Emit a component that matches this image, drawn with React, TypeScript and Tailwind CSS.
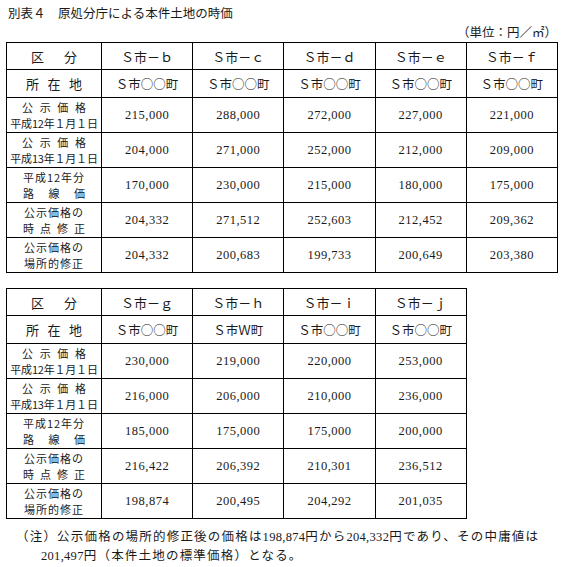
import React from "react";

const jp = { fontFamily: '"Liberation Serif", "Noto Sans CJK JP", serif' };
const cjk = { fontFamily: '"Noto Sans CJK JP", "Liberation Serif", serif' };

const kouji = (year: string) => (
  <div className="flex flex-col leading-[16px] text-[11px]">
    <div className="flex justify-between px-[15px] whitespace-nowrap">
      <span>公</span>
      <span>示</span>
      <span>価</span>
      <span>格</span>
    </div>
    <div className="tracking-[-0.2px] text-center whitespace-nowrap">
      平成{year}年１月１日
    </div>
  </div>
);

const rosen = (
  <div className="flex flex-col leading-[16px] text-[11px]">
    <div className="text-center whitespace-nowrap tracking-[1px]">平成12年分</div>
    <div className="flex justify-between px-[16px] whitespace-nowrap">
      <span>路</span>
      <span>線</span>
      <span>価</span>
    </div>
  </div>
);

const jiten = (
  <div className="flex flex-col leading-[16px] text-[11px]">
    <div className="text-center whitespace-nowrap tracking-[1px]">公示価格の</div>
    <div className="flex justify-between px-[16px] whitespace-nowrap">
      <span>時</span>
      <span>点</span>
      <span>修</span>
      <span>正</span>
    </div>
  </div>
);

const basho = (
  <div className="flex flex-col leading-[16px] text-[11px]">
    <div className="text-center whitespace-nowrap tracking-[1px]">公示価格の</div>
    <div className="text-center whitespace-nowrap tracking-[1px]">場所的修正</div>
  </div>
);

function PriceTable({
  names,
  towns,
  rows,
}: {
  names: string[];
  towns: string[];
  rows: { label: React.ReactNode; values: string[] }[];
}) {
  return (
    <table className="border-collapse table-fixed text-[#1a1a1a]" style={jp}>
      <colgroup>
        <col className="w-[95px]" />
        {names.map((n) => (
          <col key={n} className="w-[91.2px]" />
        ))}
      </colgroup>
      <tbody>
        <tr className="h-[27px]">
          <td className="border border-black text-[13px] p-0 leading-[19px]">
            <div className="flex justify-between px-[24px] whitespace-nowrap" style={cjk}>
              <span>区</span>
              <span>分</span>
            </div>
          </td>
          {names.map((n) => (
            <td
              key={n}
              className="border border-black text-center text-[13px] p-0 leading-[19px] whitespace-nowrap"
              style={cjk}
            >
              {n}
            </td>
          ))}
        </tr>
        <tr className="h-[28px]">
          <td className="border border-black text-[13px] p-0 leading-[19px]">
            <div className="flex justify-between px-[19px] whitespace-nowrap" style={cjk}>
              <span>所</span>
              <span>在</span>
              <span>地</span>
            </div>
          </td>
          {towns.map((t, i) => (
            <td
              key={i}
              className="border border-black text-center text-[12.5px] p-0 leading-[19px] whitespace-nowrap"
              style={cjk}
            >
              {t}
            </td>
          ))}
        </tr>
        {rows.map((r, i) => (
          <tr key={i} className="h-[35px]">
            <td className="border border-black p-0" style={cjk}>
              {r.label}
            </td>
            {r.values.map((v, j) => (
              <td
                key={j}
                className="border border-black text-center text-[12.5px] tracking-[0.5px] p-0 leading-[16px]"
              >
                {v}
              </td>
            ))}
          </tr>
        ))}
      </tbody>
    </table>
  );
}

export default function App() {
  const t1Rows = [
    { label: kouji("12"), values: ["215,000", "288,000", "272,000", "227,000", "221,000"] },
    { label: kouji("13"), values: ["204,000", "271,000", "252,000", "212,000", "209,000"] },
    { label: rosen, values: ["170,000", "230,000", "215,000", "180,000", "175,000"] },
    { label: jiten, values: ["204,332", "271,512", "252,603", "212,452", "209,362"] },
    { label: basho, values: ["204,332", "200,683", "199,733", "200,649", "203,380"] },
  ];
  const t2Rows = [
    { label: kouji("12"), values: ["230,000", "219,000", "220,000", "253,000"] },
    { label: kouji("13"), values: ["216,000", "206,000", "210,000", "236,000"] },
    { label: rosen, values: ["185,000", "175,000", "175,000", "200,000"] },
    { label: jiten, values: ["216,422", "206,392", "210,301", "236,512"] },
    { label: basho, values: ["198,874", "200,495", "204,292", "201,035"] },
  ];
  return (
    <div className="w-[566px] h-[567px] bg-white text-[#1a1a1a] overflow-hidden" style={cjk}>
      <div className="pl-[8px] pt-[4px] text-[12.5px] leading-[18px]">
        別表４　原処分庁による本件土地の時価
      </div>
      <div className="text-right pr-[9px] pt-[1px] text-[12.5px] leading-[18px]">
        （単位：円／㎡）
      </div>
      <div className="pl-[6px] pt-[1px]">
        <PriceTable
          names={["Ｓ市－ｂ", "Ｓ市－ｃ", "Ｓ市－ｄ", "Ｓ市－ｅ", "Ｓ市－ｆ"]}
          towns={["Ｓ市○○町", "Ｓ市○○町", "Ｓ市○○町", "Ｓ市○○町", "Ｓ市○○町"]}
          rows={t1Rows}
        />
      </div>
      <div className="pl-[6px] pt-[15px]">
        <PriceTable
          names={["Ｓ市－ｇ", "Ｓ市－ｈ", "Ｓ市－ｉ", "Ｓ市－ｊ"]}
          towns={["Ｓ市○○町", "Ｓ市Ｗ町", "Ｓ市○○町", "Ｓ市○○町"]}
          rows={t2Rows}
        />
      </div>
      <div className="pl-[16px] pt-[8px] text-[12.5px] leading-[18px] tracking-[1.2px] whitespace-nowrap">
        <div>
          （注）公示価格の場所的修正後の価格は
          <span style={jp} className="tracking-[0.3px]">198,874</span>
          円から
          <span style={jp} className="tracking-[0.3px]">204,332</span>
          円であり、その中庸値は
        </div>
        <div className="pl-[25px]">
          <span style={jp} className="tracking-[0.3px]">201,497</span>
          円（本件土地の標準価格）となる。
        </div>
      </div>
    </div>
  );
}
